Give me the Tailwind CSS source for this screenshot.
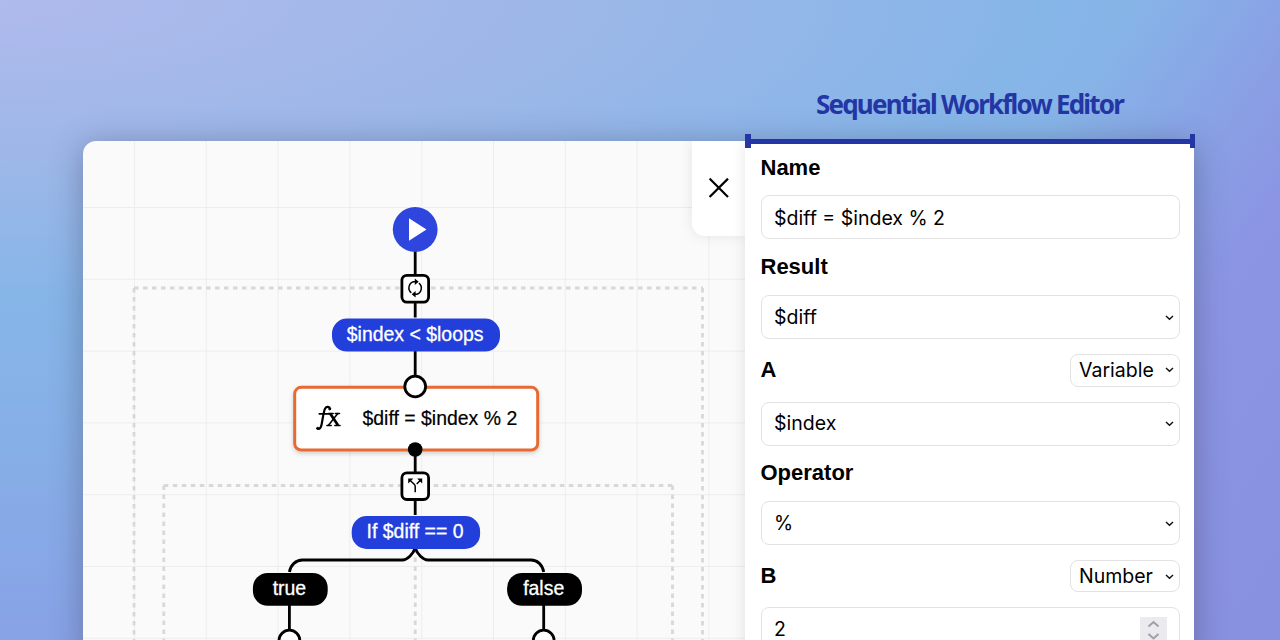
<!DOCTYPE html>
<html lang="en">
<head>
<meta charset="utf-8">
<title>Sequential Workflow Editor</title>
<script src="https://cdn.jsdelivr.net/npm/@tailwindcss/browser@4"></script>
</head>
<body class="w-[1280px] h-[640px] overflow-hidden bg-[linear-gradient(125deg,transparent_66%,#8b95e3_82%,#8890e0_100%),radial-gradient(ellipse_2625px_750px_at_0_0,#b0baec_0%,#9ab7e8_24%,#86b5e8_40%,#86b1e7_54%,#88a2e6_86%,#8894e2_100%)]">
<div class="relative flex flex-col w-[1280px] h-[640px] pl-[83px] pr-[86px] overflow-hidden">
  <header class="h-[141px] shrink-0 flex justify-end">
    <h1 class="w-[449px] pt-[86px] text-center whitespace-nowrap font-['Noto_Sans',sans-serif] font-bold text-[26px] leading-[36px] tracking-[-1.8px] text-[#2336a4]">Sequential Workflow Editor</h1>
  </header>

  <main class="relative flex w-[1111px] h-[520px] shrink-0 rounded-tl-[13px] bg-[#fafafa] shadow-[0_4px_32px_rgba(60,60,90,0.42)]">
    <svg class="w-[662px] h-[499px] shrink-0 rounded-tl-[13px]" viewBox="83 141 662 499" fill="none" font-family="'Liberation Sans', Arial, sans-serif" font-size="19.45">
      <defs>
        <pattern id="grid" x="134" y="207" width="71.8" height="71.8" patternUnits="userSpaceOnUse">
          <path d="M0 .5H71.8M.5 0V71.8" stroke="#ededed" stroke-width="1.200"/>
        </pattern>
        <filter id="soft" x="-10%" y="-20%" width="120%" height="150%"><feDropShadow dx="0" dy="2" stdDeviation="2" flood-opacity=".18"/></filter>
      </defs>
      <rect x="83" y="141" width="662" height="499" fill="url(#grid)"/>
      <!-- containers -->
      <g stroke="#d8d8d8" stroke-width="2.8" stroke-dasharray="4.5 4.5">
        <path d="M134 288H703M134 288V640M702.5 288V640"/>
        <path d="M163.8 485.5H673M163.8 485.5V640M672.5 485.5V640"/>
        <path d="M415.2 548.5V640"/>
      </g>
      <!-- connectors -->
      <g stroke="#000" stroke-width="2.8">
        <path d="M415.2 250V275M415.2 303V317.5M415.2 351V376M415.2 450V472M415.2 500V515M289.4 605V630M543.7 605V630"/>
        <path d="M415.2 548C413 554 407.500 560 402.500 560H302.500C296 560 290.500 565 289.400 572M415.200 548C417.400 554 422.900 560 427.900 560H531C537.500 560 542.600 565 543.700 572"/>
      </g>
      <!-- start -->
      <circle cx="415.2" cy="229.500" r="22.400" fill="#2e46dd"/>
      <path d="M409 218.300V240.700L426.500 229.500Z" fill="#fff"/>
      <!-- loop -->
      <rect x="401.900" y="275.400" width="26.700" height="26.700" rx="5" fill="#fff" stroke="#000" stroke-width="2.800"/>
      <g stroke="#000" stroke-width="1.500">
        <path d="M411.300 292.800A6.300 6.300 0 0 1 413.500 281.800H415.500M418.900 283.200A6.300 6.300 0 0 1 416.800 294.200H414.800"/>
        <path d="M414.800 278.500L418.700 281.800L414.800 285ZM415.600 291L411.700 294.200L415.600 297.500Z" fill="#000" stroke="none"/>
      </g>
      <rect x="332" y="318.600" width="168" height="33" rx="15" fill="#233fdb"/>
      <text x="346.800" y="341" fill="#fff" stroke="#fff" stroke-width=".3">$index &lt; $loops</text>
      <!-- task -->
      <rect x="294.700" y="387.300" width="243" height="62.700" rx="6.500" fill="#fff" stroke="#e66a32" stroke-width="3" filter="url(#soft)"/>
      <g stroke="#000" stroke-linecap="round">
        <path d="M330.200 408.800C329.600 406.700 326.500 406 325 408.800C323.600 411.500 322.700 419 321.700 424C321 427.700 319.800 429.600 317.300 428.600" stroke-width="2.200"/>
        <circle cx="329.600" cy="409" r=".9" fill="#000" stroke-width="1"/>
        <circle cx="317.700" cy="428.300" r="1" fill="#000" stroke-width="1"/>
        <path d="M319.300 413.800H329.500" stroke-width="1.700"/>
        <path d="M330.300 413.700L338 425.300" stroke-width="2.700" stroke-linecap="butt"/>
        <path d="M337.800 413.500L328.500 425.300" stroke-width="1.500"/>
        <path d="M328.700 413.500H333.200M335.300 413.500H339.500M326.900 425.500H331.200M334.800 425.500H340" stroke-width="1.500"/>
      </g>
      <text x="362.500" y="425" fill="#000" stroke="#000" stroke-width=".2">$diff = $index % 2</text>
      <circle cx="415.200" cy="386.500" r="10.400" fill="#fff" stroke="#000" stroke-width="2.800"/>
      <circle cx="415.200" cy="449.500" r="7.300" fill="#000"/>
      <!-- switch -->
      <rect x="401.900" y="472.800" width="26.700" height="26.700" rx="5" fill="#fff" stroke="#000" stroke-width="2.800"/>
      <path d="M415.200 492.300V486.500C415.200 485.500 414.900 485 414.200 484.300L409.500 479.800M416.700 484L420.900 479.800" stroke="#000" stroke-width="1.500"/>
      <path d="M408.200 478.500H413.300L408.200 483.600ZM422.200 478.500H417.100L422.200 483.600Z" fill="#000"/>
      <rect x="351.700" y="516" width="128.400" height="32.900" rx="15" fill="#233fdb"/>
      <text x="366.600" y="538.300" fill="#fff" stroke="#fff" stroke-width=".3">If $diff == 0</text>
      <!-- branches -->
      <rect x="252.900" y="572.900" width="74.800" height="32.900" rx="15" fill="#000"/>
      <text x="289.400" y="595" fill="#fff" stroke="#fff" stroke-width=".3" text-anchor="middle">true</text>
      <rect x="507.100" y="572.900" width="74.900" height="32.900" rx="15" fill="#000"/>
      <text x="543.700" y="595" fill="#fff" stroke="#fff" stroke-width=".3" text-anchor="middle">false</text>
      <circle cx="289.400" cy="640.500" r="10.400" fill="#fff" stroke="#000" stroke-width="2.800"/>
      <circle cx="543.700" cy="640.500" r="10.400" fill="#fff" stroke="#000" stroke-width="2.800"/>
    </svg>

    <!-- editor toggle -->
    <button class="absolute left-[609px] top-0 w-[54px] h-[95px] pb-[2px] rounded-bl-[13px] bg-white flex items-center justify-center shadow-[0_0_14px_rgba(0,0,0,0.09)] [clip-path:inset(0_0_-20px_-20px)]" aria-label="Close">
      <svg class="w-[20px] h-[20px]" viewBox="0 0 20 20" fill="none" stroke="#000" stroke-width="2.200"><path d="M.6 .6L19 19M19 .6L.6 19"/></svg>
    </button>

    <aside class="relative w-[449px] flex flex-col bg-white pl-[15.500px] pr-[14.500px] font-['Inter',sans-serif] text-[19.500px] text-black shadow-[0_0_14px_rgba(0,0,0,0.10)] [clip-path:inset(0_0_0_-20px)]">
      <div class="h-[54px] pb-[2px] shrink-0 flex items-center"><label class="font-['Liberation_Sans',Arial,sans-serif] font-bold text-[22px]">Name</label></div>
      <div class="h-[44px] pt-[3px] shrink-0 flex items-center rounded-[8px] border border-[#e2e2e2] px-[12.500px]">$diff = $index % 2</div>
      <div class="h-[56px] pb-[2px] shrink-0 flex items-center"><label class="font-['Liberation_Sans',Arial,sans-serif] font-bold text-[22px]">Result</label></div>
      <div class="h-[44px] pt-[2px] shrink-0 flex items-center justify-between rounded-[8px] border border-[#e2e2e2] pl-[12.500px] pr-[5px]">$diff
        <svg class="w-[9px] h-[6px]" viewBox="0 0 9 6" fill="none" stroke="#111" stroke-width="1.400"><path d="M1 .9L4.500 4.300L8 .9"/></svg></div>
      <div class="h-[62.500px] shrink-0 flex items-center justify-between"><label class="pb-[2px] font-['Liberation_Sans',Arial,sans-serif] font-bold text-[22px]">A</label>
        <div class="w-[109.500px] h-[33px] flex items-center justify-between rounded-[8px] border border-[#e2e2e2] pl-[8px] pr-[5px]">Variable
          <svg class="w-[9px] h-[6px]" viewBox="0 0 9 6" fill="none" stroke="#111" stroke-width="1.400"><path d="M1 .9L4.500 4.300L8 .9"/></svg></div></div>
      <div class="h-[44px] pt-[1px] shrink-0 flex items-center justify-between rounded-[8px] border border-[#e2e2e2] pl-[12.500px] pr-[5px]">$index
        <svg class="w-[9px] h-[6px]" viewBox="0 0 9 6" fill="none" stroke="#111" stroke-width="1.400"><path d="M1 .9L4.500 4.300L8 .9"/></svg></div>
      <div class="h-[55.500px] pb-[2px] shrink-0 flex items-center"><label class="font-['Liberation_Sans',Arial,sans-serif] font-bold text-[22px]">Operator</label></div>
      <div class="h-[44px] pt-[2px] shrink-0 flex items-center justify-between rounded-[8px] border border-[#e2e2e2] pl-[12.500px] pr-[5px]">%
        <svg class="w-[9px] h-[6px]" viewBox="0 0 9 6" fill="none" stroke="#111" stroke-width="1.400"><path d="M1 .9L4.500 4.300L8 .9"/></svg></div>
      <div class="h-[62px] shrink-0 flex items-center justify-between"><label class="pb-[1px] font-['Liberation_Sans',Arial,sans-serif] font-bold text-[22px]">B</label>
        <div class="w-[109.500px] h-[32px] pt-[1px] flex items-center justify-between rounded-[8px] border border-[#e2e2e2] pl-[8px] pr-[5px]">Number
          <svg class="w-[9px] h-[6px]" viewBox="0 0 9 6" fill="none" stroke="#111" stroke-width="1.400"><path d="M1 .9L4.500 4.300L8 .9"/></svg></div></div>
      <div class="h-[44px] pt-[2px] shrink-0 flex items-center justify-between rounded-[8px] border border-[#e2e2e2] pl-[12.500px] pr-[12px]">2
        <svg class="w-[27px] h-[27px] bg-[#ebeaef]" viewBox="0 0 27 27" fill="none" stroke="#a0a0a6" stroke-width="2"><path d="M8.500 9.500L13.500 5L18.500 9.500M8.500 17L13.500 21.500L18.500 17"/></svg></div>
    </aside>

    <!-- width marker over the editor's top edge -->
    <div class="absolute left-[662.300px] top-[-7px] w-[449.700px] h-[14px] flex items-center justify-between">
      <span class="w-[5.300px] h-[14px] bg-[#2336a4]"></span>
      <span class="flex-1 h-[5px] bg-[#2336a4]"></span>
      <span class="w-[5.300px] h-[14px] bg-[#2336a4]"></span>
    </div>
  </main>
</div>
</body>
</html>
